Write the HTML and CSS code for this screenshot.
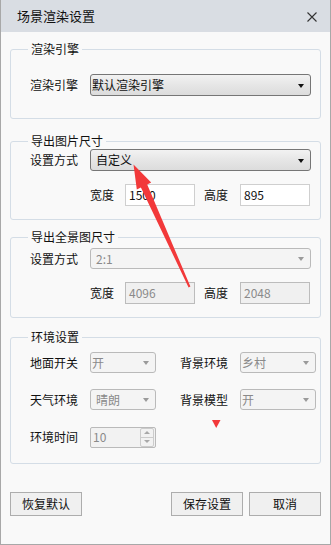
FILE: index.html
```html
<!DOCTYPE html>
<html>
<head>
<meta charset="utf-8">
<link rel="stylesheet" href="styles.css">
</head>
<body>
<div class="window">
  <div class="titlebar">
    <span class="title">场景渲染设置</span>
    <svg class="close" width="10" height="10" viewBox="0 0 10 10"><path d="M0.5 0.5 L9.5 9.5 M9.5 0.5 L0.5 9.5" stroke="#333" stroke-width="1.1" fill="none"/></svg>
  </div>
  <div class="content">
    <fieldset class="group g1">
      <legend>渲染引擎</legend>
      <div class="row">
        <span class="label">渲染引擎</span>
        <div class="select wide tight"><span>默认渲染引擎</span><i class="caret"></i></div>
      </div>
    </fieldset>

    <fieldset class="group g2">
      <legend>导出图片尺寸</legend>
      <div class="row">
        <span class="label">设置方式</span>
        <div class="select wide"><span>自定义</span><i class="caret"></i></div>
      </div>
      <div class="row size-row">
        <span class="slabel">宽度</span>
        <div class="input">1500</div>
        <span class="slabel second">高度</span>
        <div class="input">895</div>
      </div>
    </fieldset>

    <fieldset class="group g3">
      <legend>导出全景图尺寸</legend>
      <div class="row">
        <span class="label">设置方式</span>
        <div class="select wide disabled"><span>2:1</span><i class="caret"></i></div>
      </div>
      <div class="row size-row">
        <span class="slabel">宽度</span>
        <div class="input disabled">4096</div>
        <span class="slabel second">高度</span>
        <div class="input disabled">2048</div>
      </div>
    </fieldset>

    <fieldset class="group g4">
      <legend>环境设置</legend>
      <div class="env">
        <span class="label">地面开关</span>
        <div class="select small disabled tight"><span>开</span><i class="caret"></i></div>
        <span class="label">背景环境</span>
        <div class="select medium disabled tight"><span>乡村</span><i class="caret"></i></div>

        <span class="label">天气环境</span>
        <div class="select small disabled"><span>晴朗</span><i class="caret"></i></div>
        <span class="label">背景模型</span>
        <div class="select medium disabled tight"><span>开</span><i class="caret"></i></div>

        <span class="label">环境时间</span>
        <div class="spin disabled"><span>10</span>
          <div class="spin-btns"><i class="up"></i><i class="down"></i></div>
        </div>
      </div>
    </fieldset>
  </div>

  <div class="buttons">
    <button class="btn">恢复默认</button>
    <span class="spacer"></span>
    <button class="btn">保存设置</button>
    <button class="btn">取消</button>
  </div>

  <svg class="annot" width="331" height="545" viewBox="0 0 331 545">
    <polygon points="133.5,164.5 151.2,182.5 147.2,184.5 190.4,286.6 188.6,287.4 140.9,187.5 136.8,189.5" fill="#f2393a"/>
    <polygon points="212,420 220.5,420 216.2,428" fill="#f2393a"/>
  </svg>
</div>
</body>
</html>
```
FILE: styles.css
```css
* { box-sizing: border-box; }

body {
  margin: 0;
  font-family: "Noto Sans CJK SC", "Noto Sans", sans-serif;
  font-size: 12px;
  color: #111;
}

.window {
  position: relative;
  width: 331px;
  height: 545px;
  background: #f9f9f9;
  border: 1px solid #a8a8a8;
  border-top: 0;
  display: flex;
  flex-direction: column;
}

.titlebar {
  height: 32px;
  flex: none;
  background: #d9dde3;
  display: flex;
  align-items: center;
  justify-content: space-between;
  padding: 0 13px 0 16px;
}

.title {
  font-size: 13px;
  line-height: 16px;
  color: #111;
}

.close { display: block; margin-top: 1px; }

.content {
  padding: 0 9px;
}

.group {
  margin: 0;
  padding: 0;
  min-width: 0;
  border: 1px solid #d4dde6;
  border-radius: 3px;
}

.group legend {
  margin-left: 17px;
  padding: 0 3px;
  font-size: 12px;
  line-height: 16px;
  color: #111;
}

.g1 { margin-top: 9px; padding: 17px 0 22px; }
.g2 { margin-top: 14px; padding: 0 0 13px; }
.g3 { margin-top: 9px; padding: 3px 0 13px; }
.g4 { margin-top: 11px; padding: 7px 0 16px; }

.row {
  display: flex;
  align-items: center;
  padding-left: 19px;
}

.label {
  width: 60px;
  flex: none;
  line-height: 16px;
}

.size-row {
  margin-top: 13px;
  padding-left: 79px;
}

.slabel {
  width: 35px;
  flex: none;
  line-height: 16px;
}

.slabel.second {
  margin-left: 9px;
  width: 36px;
}

.select {
  position: relative;
  height: 22px;
  border: 1px solid #767676;
  border-radius: 3px;
  background: linear-gradient(#f2f2f2, #e6e6e6 50%, #dcdcdc);
  display: flex;
  align-items: center;
  padding: 0 6px 0 5px;
  line-height: 16px;
  color: #111;
}

.select span { flex: 1; }

.select.tight { padding-left: 1px; }

.select.wide { width: 221px; }
.select.small { width: 66px; height: 21px; }
.select.medium { width: 76px; height: 21px; }

.g3 .select { height: 21px; }

.caret {
  width: 0;
  height: 0;
  border-left: 3.5px solid transparent;
  border-right: 3.5px solid transparent;
  border-top: 4px solid #111;
  margin-top: 1px;
}

.select.disabled {
  background: #f4f4f4;
  border-color: #bababa;
  color: #8a8a8a;
}

.select.disabled .caret {
  border-top-color: #9a9a9a;
}

.input {
  width: 70px;
  height: 22px;
  border: 1px solid #cfcfcf;
  background: #fff;
  padding: 0 3px;
  display: flex;
  align-items: center;
  line-height: 16px;
  color: #111;
}

.input.disabled {
  background: #f0f0f0;
  border-color: #bcbcbc;
  color: #8a8a8a;
}

.env {
  display: grid;
  grid-template-columns: 60px 66px 24px 60px 76px;
  grid-auto-rows: 21px;
  row-gap: 16px;
  align-items: center;
  padding-left: 19px;
}

.env .label:nth-child(3),
.env .label:nth-child(7) { grid-column: 4; }

.env > .label { line-height: 16px; }

.spin {
  position: relative;
  width: 66px;
  height: 21px;
  margin-top: 1px;
  border: 1px solid #bababa;
  border-radius: 2px;
  background: #f2f2f2;
  color: #8a8a8a;
  display: flex;
  align-items: center;
  padding-left: 2px;
  line-height: 16px;
}

.spin span { flex: 1; }

.spin-btns {
  width: 14px;
  height: 19px;
  margin-right: 1px;
  display: flex;
  flex-direction: column;
  border: 1px solid #cccccc;
  border-radius: 2px;
}

.spin-btns i {
  flex: 1;
  display: flex;
  align-items: center;
  justify-content: center;
}

.spin-btns i.up { border-bottom: 1px solid #cccccc; }

.spin-btns i.up::before {
  content: "";
  border-left: 3px solid transparent;
  border-right: 3px solid transparent;
  border-bottom: 3px solid #a8a8a8;
}

.spin-btns i.down::before {
  content: "";
  border-left: 3px solid transparent;
  border-right: 3px solid transparent;
  border-top: 3px solid #a8a8a8;
}

.buttons {
  display: flex;
  gap: 6px;
  padding: 0 9px;
  margin-top: 28px;
}

.spacer { flex: 1; }

.btn {
  width: 72px;
  height: 24px;
  margin: 0;
  padding: 0;
  border: 1px solid #adadad;
  background: #f0f0f0;
  font-family: "Noto Sans CJK SC", "Noto Sans", sans-serif;
  font-size: 12px;
  color: #111;
  line-height: 16px;
}

.annot {
  position: absolute;
  left: -1px;
  top: 0;
  pointer-events: none;
}
```
